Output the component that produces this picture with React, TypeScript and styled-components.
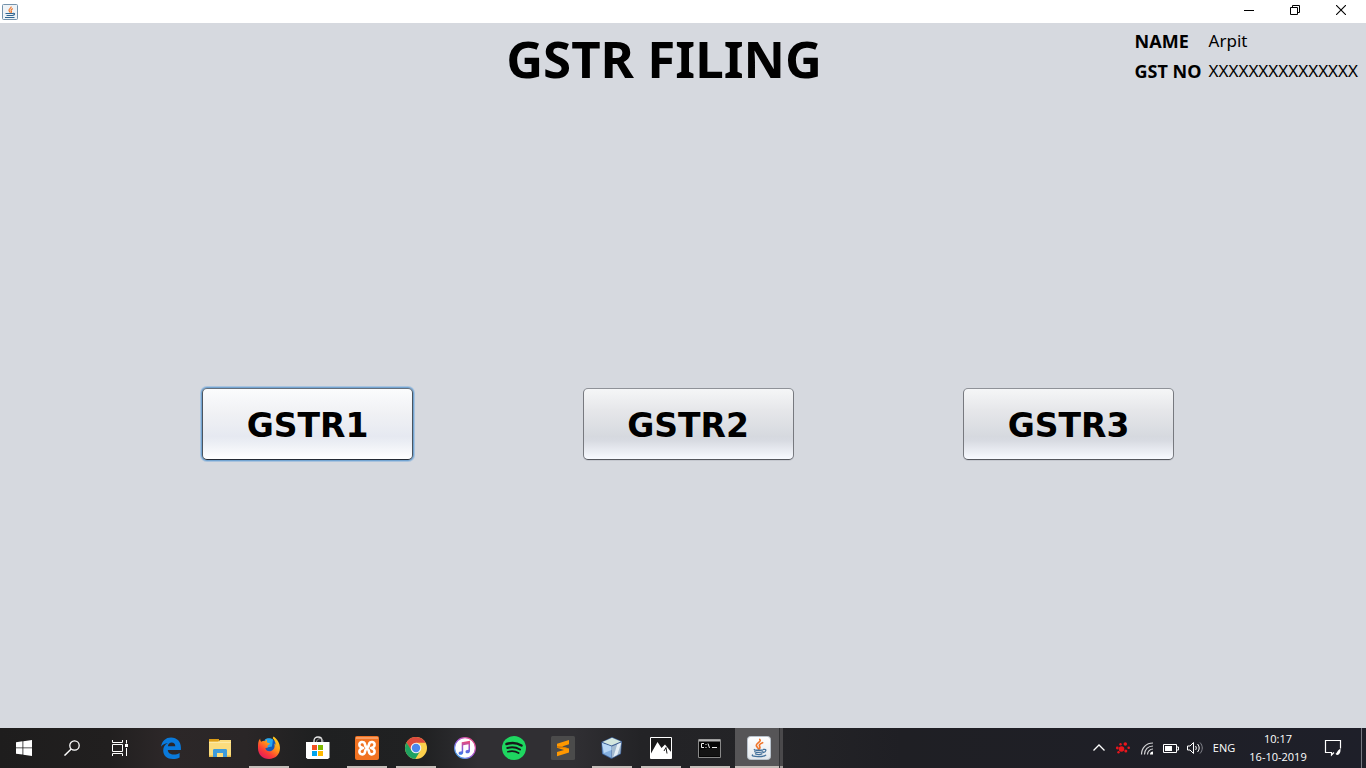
import React from "react";
import styled, { createGlobalStyle, css } from "styled-components";

const GlobalStyle = createGlobalStyle`
  *, *::before, *::after { box-sizing: border-box; }
  body { margin: 0; }
`;

const Window = styled.div`
  display: flex;
  flex-direction: column;
  min-height: 100vh;
  background: #d6d9df;
  color: #000;
  font-family: "Noto Sans", "Open Sans", sans-serif;
`;

const TitleBar = styled.div`
  display: flex;
  align-items: center;
  justify-content: space-between;
  height: 23px;
  padding: 0 2px;
  background: #fff;
`;

const WindowControls = styled.div`
  display: flex;
  align-self: flex-start;
`;

const WindowButton = styled.button`
  display: grid;
  place-items: center;
  width: 46px;
  height: 20px;
  padding: 0;
  border: 0;
  background: transparent;
  color: #000;
`;

const Header = styled.header`
  display: grid;
  grid-template-columns: 1fr auto 1fr;
  height: 97px;
  padding-right: 8px;
`;

const Title = styled.h1`
  grid-column: 2;
  margin: 0 30px 0 0;
  font-size: 51px;
  line-height: 70px;
  font-weight: 700;
  white-space: nowrap;
`;

const Taxpayer = styled.dl`
  display: grid;
  grid-template-columns: auto auto;
  justify-content: end;
  align-content: start;
  column-gap: 4px;
  margin: 0;
  padding-top: 3px;
  font-size: 17px;
  line-height: 30px;
  white-space: nowrap;
`;

const Term = styled.dt`
  min-width: 70px;
  font-size: 18px;
  font-weight: 700;
`;

const Value = styled.dd`
  margin: 0;
`;

const Main = styled.main`
  display: flex;
  flex: 1;
  align-items: center;
  justify-content: space-between;
  gap: 24px;
  padding: 0 192px 0 202px;
`;

const FormButton = styled.button<{ $focused?: boolean }>`
  width: 211px;
  height: 72px;
  padding: 4px 0 0;
  border: 1px solid;
  border-color: #8f9298 #77797f #55575d;
  border-radius: 5px;
  background: linear-gradient(#f5f6f7 0%, #e6e7ea 30%, #d6d9df 68%, #d8dbe2 74%, #f8faff 100%);
  box-shadow: 0 1px 0 #c5c8cf;
  color: #000;
  font-family: "DejaVu Sans", "Noto Sans", sans-serif;
  font-size: 33px;
  line-height: 40px;
  font-weight: 700;
  ${(p) =>
    p.$focused &&
    css`
      border-color: #65707d #4b5560 #252b35;
      background: linear-gradient(#fbfcfd 0%, #f0f1f4 35%, #e6e9f1 68%, #ebeef4 76%, #ffffff 100%);
      box-shadow: 0 0 0 1px #73a4d1, 0 0 0 2px #a9c3de;
    `}
  &:focus {
    outline: none;
  }
`;

const Taskbar = styled.footer`
  display: flex;
  justify-content: space-between;
  height: 40px;
  background: linear-gradient(
    90deg,
    #1e1d1d 0%,
    #211f1f 8%,
    #2c2728 12%,
    #2a2627 18%,
    #1f2021 23%,
    #202122 31%,
    #302f33 35%,
    #302f33 42%,
    #232326 47%,
    #242427 57%,
    #1f1f24 66%,
    #1e1f29 100%
  );
  color: #fff;
  font-family: "Open Sans", "Noto Sans", sans-serif;
  font-size: 11px;
  line-height: 18px;
`;

const Group = styled.div`
  display: flex;
`;

const Apps = styled.nav`
  display: flex;
  gap: 1px;
  margin-left: 3px;
`;

const TaskButton = styled.button<{ $running?: boolean; $active?: boolean }>`
  display: grid;
  place-items: center;
  width: 48px;
  height: 40px;
  padding: 0;
  border: 0;
  background: transparent;
  color: #fff;
  ${(p) =>
    p.$running &&
    css`
      background: linear-gradient(#c4beb9, #c4beb9) bottom center / 40px 2px no-repeat;
    `}
  ${(p) =>
    p.$active &&
    css`
      background:
        linear-gradient(#c4beb9, #c4beb9) bottom left / 44px 2px no-repeat,
        linear-gradient(#a29d9a, #a29d9a) bottom right / 3px 2px no-repeat,
        linear-gradient(90deg, #565557 44px, #323234 44px, #323234 45px, #4a494b 45px);
    `}
`;

const Tray = styled.div`
  display: flex;
  align-items: center;
`;

const TrayButton = styled.button`
  display: grid;
  place-items: center;
  width: 24px;
  height: 40px;
  padding: 0;
  border: 0;
  background: transparent;
  color: #fff;
  font: inherit;
`;

const LanguageButton = styled(TrayButton)`
  width: 34px;
`;

const Clock = styled(TrayButton)`
  align-content: center;
  width: 74px;
`;

const NotificationButton = styled(TrayButton)`
  width: 36px;
`;

const ShowDesktop = styled(TrayButton)`
  width: 5px;
  margin-left: 10px;
  border-left: 1px solid #777982;
`;

const Svg = ({ size = 24, children }: { size?: number; children: React.ReactNode }) => (
  <svg width={size} height={size} viewBox={`0 0 ${size} ${size}`} fill="none" aria-hidden="true">
    {children}
  </svg>
);

const CupArt = () => (
  <>
    <path d="M12.8 3.5c2 2.200-3.900 3.500-3.500 6 .2 1.400 1.700 2.200 2.300 3.600M15.600 6.700c-2 .8-3.700 1.700-3.200 3 .4 1 1.200 1.600.1 3.100" stroke="#f0752a" strokeWidth="1.700" strokeLinecap="round" />
    <path d="M7.300 13.500c-.6 1 8.500 1 9.200 0M7.800 15.700c1.500 1 6.200 1 8 0M8.500 17.800c1.700.8 4.700.8 6.400 0M16.800 13.400c3-.6 2.700 2.500-.7 3.100M5.500 19c-1.800 2.200 12 2 13.200.2" stroke="#43709a" strokeWidth="1.300" strokeLinecap="round" />
  </>
);

const JavaIcon = () => (
  <Svg>
    <defs>
      <linearGradient id="javaTile" x1="0" y1="0" x2="0" y2="1">
        <stop stopColor="#ffffff" />
        <stop offset="1" stopColor="#e2e7ec" />
      </linearGradient>
    </defs>
    <rect x="0.5" y="0.5" width="23" height="23" rx="3" fill="url(#javaTile)" stroke="#b9c3cd" />
    <CupArt />
  </Svg>
);

const WindowIcon = () => (
  <Svg size={16}>
    <rect x="0.5" y="0.5" width="15" height="15" rx="1" fill="#eef3f7" stroke="#7492ab" />
    <path d="M9 2.500c1 1.500-2.500 2.200-2 4 .2.800 1 1.200 1.200 2.200M10.800 4.600C9 5.300 8.700 6 9.300 7c.3.600.3 1 0 1.700" stroke="#ee762b" strokeWidth="1.200" />
    <path d="M3.500 9.500H11M4.500 11.500h6M11 9.300c2.300-.3 2 1.700-.6 2.200M3 13.500h9.500" stroke="#2f6591" strokeWidth="1.200" />
  </Svg>
);

const StartIcon = () => (
  <Svg size={16}>
    <path d="M0 2.200 6.500 1.300v6.200H0zM7.300 1.200 16 0v7.500H7.300zM0 8.300h6.500v6.300L0 13.700zM7.300 8.300H16V16l-8.700-1.200z" fill="#fff" />
  </Svg>
);

const SearchIcon = () => (
  <Svg size={16}>
    <circle cx="10.500" cy="5.500" r="4.700" stroke="#fff" strokeWidth="1.300" />
    <path d="M7.200 8.900.5 15.600" stroke="#fff" strokeWidth="1.400" />
  </Svg>
);

const TaskViewIcon = () => (
  <Svg size={16}>
    <path d="M.5 0v2.500h10V0M.5 16v-2.500h10V16M.5 4.500h10v7H.5zM14.500 0v3.500M14.500 8v8" stroke="#fff" />
    <path d="M13 4h3v3h-3z" fill="#fff" />
  </Svg>
);

const EdgeIcon = () => (
  <Svg>
    <path d="M2 10.800C3 5 6.800 1.600 12 1.600c6 0 9.900 4.300 9.900 10v2.500H8.800c.2 3 2.700 4.500 6 4.500 2.200 0 4-.6 5.800-1.700v4.600c-2 1.100-4.300 1.500-6.800 1.500-5.700 0-9.600-3.400-9.600-8.500 0-3.400 1.700-6 4.700-7.400C6 7.500 3.500 8.800 2 10.800zM8.900 10.200h7.400c-.1-2.300-1.400-3.600-3.600-3.600-2 0-3.400 1.300-3.800 3.600z" fill="#0a7adb" />
  </Svg>
);

const FolderIcon = () => (
  <Svg>
    <path d="M1 3h10v4H1z" fill="#dc9d17" />
    <path d="M1 5.500h9L12 4h11v17H1z" fill="#fbdc7d" />
    <path d="M1 6h22v1H1z" fill="#fce9a5" />
    <path d="M5 21v-6.500C5 13.500 5.500 13 6.500 13h11c1 0 1.500.5 1.500 1.500V21h-4v-4H9v4z" fill="#3d9bdb" />
    <path d="M1 19.500h4V21H1zM19 19.500h4V21h-4z" fill="#e6b948" />
  </Svg>
);

const FirefoxIcon = () => (
  <Svg>
    <defs>
      <linearGradient id="foxBody" x1="1" y1="0" x2="0.300" y2="1">
        <stop stopColor="#ffe226" />
        <stop offset="0.450" stopColor="#ff9a18" />
        <stop offset="0.750" stopColor="#fb4034" />
        <stop offset="1" stopColor="#e41b5b" />
      </linearGradient>
    </defs>
    <circle cx="12" cy="11.500" r="9" fill="#1459b8" />
    <path d="M8 3.500c2-1.600 6-1.500 8 0l-1 7-5 1z" fill="#25a8ee" />
    <path d="M3.200 2.500c-.1 1.300.3 2.300.9 3.200C5.200 5 6.600 5 8 5.300c.4-.8 1.300-1.500 2.300-1.900-.6 1.100-.7 2.200-.1 3.200.8.500 1.700.6 2.700.7-.1 1.300-1.300 1.700-2.200 2.200-.2.800-.3 1.800-.2 2.400-.8-.2-1.500 0-2.200.4.800 3.200 3.900 3.600 6.400 2.400 3-1.400 3.400-4.600 2.500-7.200l1.400 1.200C18.500 6 17.300 4 15.700 2.300L16.500.5c3.800 2.600 6.500 6.600 6.500 11.600C23 18.600 18.400 23 12 23S1 18.600 1 12.300C1 8 .9 5.200 3.200 2.500z" fill="url(#foxBody)" />
  </Svg>
);

const StoreIcon = () => (
  <Svg>
    <path d="M8 7V4.800C8 2.500 9.600 1 12 1s4 1.500 4 3.800V7" stroke="#e8e8e8" strokeWidth="1.300" />
    <path d="M10.500 6c0-3 4.500-5 6.500-1.500V6" stroke="#aaa" strokeWidth=".8" />
    <path d="M0 6h23.500v15.500L22 23H1.500L0 21.500z" fill="#fff" />
    <path d="M6 9h5v5H6z" fill="#f25022" />
    <path d="M12 9h5v5h-5z" fill="#7fba00" />
    <path d="M6 15h5v5H6z" fill="#00a4ef" />
    <path d="M12 15h5v5h-5z" fill="#ffb900" />
  </Svg>
);

const XamppIcon = () => (
  <Svg>
    <rect width="24" height="24" rx="2" fill="#f17221" />
    <path d="M1 2h22" stroke="#f9ab79" strokeWidth="1.500" />
    <path d="M4.500 9.500C3.500 5.500 9.500 4.500 10 8.500c.2 2 .8 2.500 2 2.500s1.800-.5 2-2.500c.5-4 6.500-3 5.500 1-.3 1.300-1.500 2-3.500 2.500 2 .5 3.200 1.500 3.500 2.800 1 4-5 5-5.500 1-.2-2-.8-2.800-2-2.800s-1.800.8-2 2.800c-.5 4-6.500 3-5.500-1C4.800 13.500 6 12.500 8 12c-2-.5-3.200-1.200-3.500-2.500z" stroke="#fff" strokeWidth="2.600" strokeLinejoin="round" />
  </Svg>
);

const ChromeIcon = () => (
  <Svg>
    <circle cx="12" cy="12" r="11" fill="#fcd04b" />
    <path d="M2.500 6.500A11 11 0 0 1 21.600 6.700H12v5.500L6.900 14.700z" fill="#dc4b3e" />
    <path d="M2.500 6.500A11 11 0 0 0 11.300 23l5-8.200-4.300-1.300-4.500 1z" fill="#1fa261" />
    <circle cx="12" cy="12" r="5.300" fill="#f1f1f1" />
    <circle cx="12" cy="12" r="4.200" fill="#4a87ec" />
  </Svg>
);

const MusicIcon = () => (
  <Svg>
    <defs>
      <linearGradient id="musicRing" x1="0" y1="1" x2="1" y2="0">
        <stop stopColor="#29b9f2" />
        <stop offset="0.500" stopColor="#a75be0" />
        <stop offset="1" stopColor="#fb4a72" />
      </linearGradient>
      <linearGradient id="musicNote" x1="0" y1="1" x2="0" y2="0">
        <stop stopColor="#337bea" />
        <stop offset="0.500" stopColor="#9656d0" />
        <stop offset="1" stopColor="#f24a6f" />
      </linearGradient>
    </defs>
    <circle cx="12" cy="12" r="10.400" fill="#fff" stroke="url(#musicRing)" strokeWidth="1.200" />
    <path d="M8.700 6.300 17 4.700v10.200c0 3-4.500 3.200-4.500.8 0-1.500 1.300-1.900 3-2V8.200l-5.300 1v7.200c0 3-4.600 3.200-4.600.8 0-1.500 1.400-1.900 3.100-2z" fill="url(#musicNote)" />
  </Svg>
);

const SpotifyIcon = () => (
  <Svg>
    <circle cx="12" cy="12" r="12" fill="#1ed760" />
    <path d="M4.500 8c5-1.600 10.800-1 15 1.500" stroke="#17191a" strokeWidth="2.500" strokeLinecap="round" />
    <path d="M5.300 12c4.400-1.200 9-.7 12.700 1.500" stroke="#17191a" strokeWidth="2" strokeLinecap="round" />
    <path d="M5.900 15.700c3.700-1 7.700-.6 10.700 1.300" stroke="#17191a" strokeWidth="1.700" strokeLinecap="round" />
  </Svg>
);

const SublimeIcon = () => (
  <Svg>
    <rect width="24" height="24" rx="1.500" fill="#4b4b4b" />
    <path d="M6 7.800 18 4v4.200L11 10.400l7 2.200v4L6 20.300v-4.200l7-2.200-7-2.100z" fill="#ff9800" />
    <path d="m6 11.800 12 .8-7-2.200L6 10z" fill="#d97b00" />
  </Svg>
);

const CubeIcon = () => (
  <Svg>
    <path d="m12 1 10 4.300-1 12.700-9.500 5L2 18 1.300 6z" fill="#3c5d92" />
    <path d="m12 1.700 9 3.900-9.500 4L2.500 6z" fill="#d3e6df" />
    <path d="m2 7 9.500 3.500v11.600l-8.700-4.500z" fill="#84b0df" />
    <path d="m2 7 9.500 3.500v3.500L4 17z" fill="#b8d7f5" />
    <path d="m21.300 6.500-9.500 4v11.600l8.500-4.500z" fill="#a2bad0" />
    <path d="m21.300 6.500-4 1.700-4 12.700 4-2.100z" fill="#e3edf5" />
  </Svg>
);

const PhotosIcon = () => (
  <Svg>
    <path d="M1.500 1.500h21v21h-21z" fill="#19191a" stroke="#fff" />
    <path d="M2 17.500 8.500 6l4 6 3.500-3.500 6.500 8V22H2z" fill="#fff" />
    <path d="m15 15 2-3.500 1 6" stroke="#19191a" strokeWidth="1" />
  </Svg>
);

const TerminalIcon = () => (
  <Svg>
    <path d="M.5 3.500h22v18H.5z" fill="#060606" stroke="#898989" />
    <path d="M1 4.500h21" stroke="#b5b5b5" strokeWidth="2" />
    <path d="M6 7.500H3.500v4H6M7.500 8.500h1M7.500 11.500h1M10 7.500l1.500 4.500M14 11.500h5" stroke="#eee" />
    <path d="m2 14 20-3v9H2z" fill="#fff" fillOpacity=".06" />
  </Svg>
);

const apps = [
  { name: "Microsoft Edge", icon: <EdgeIcon /> },
  { name: "File Explorer", icon: <FolderIcon /> },
  { name: "Firefox", icon: <FirefoxIcon />, running: true },
  { name: "Microsoft Store", icon: <StoreIcon /> },
  { name: "XAMPP", icon: <XamppIcon />, running: true },
  { name: "Google Chrome", icon: <ChromeIcon />, running: true },
  { name: "iTunes", icon: <MusicIcon /> },
  { name: "Spotify", icon: <SpotifyIcon /> },
  { name: "Sublime Text", icon: <SublimeIcon /> },
  { name: "NetBeans", icon: <CubeIcon />, running: true },
  { name: "Photos", icon: <PhotosIcon />, running: true },
  { name: "Command Prompt", icon: <TerminalIcon />, running: true },
  { name: "Java", icon: <JavaIcon />, active: true },
];

export default function App() {
  return (
    <Window>
      <GlobalStyle />
      <TitleBar>
        <WindowIcon />
        <WindowControls>
          <WindowButton aria-label="Minimize">
            <Svg size={10}>
              <path d="M0 5.500h10" stroke="currentColor" />
            </Svg>
          </WindowButton>
          <WindowButton aria-label="Restore">
            <Svg size={10}>
              <path d="M.5 2.500h7v7h-7zM2.500 2V.5h7v7H8" stroke="currentColor" />
            </Svg>
          </WindowButton>
          <WindowButton aria-label="Close">
            <Svg size={10}>
              <path d="m0 0 10 10M10 0 0 10" stroke="currentColor" strokeWidth="1.100" />
            </Svg>
          </WindowButton>
        </WindowControls>
      </TitleBar>

      <Header>
        <Title>GSTR FILING</Title>
        <Taxpayer>
          <Term>NAME</Term>
          <Value>Arpit</Value>
          <Term>GST NO</Term>
          <Value>XXXXXXXXXXXXXXX</Value>
        </Taxpayer>
      </Header>

      <Main>
        <FormButton $focused>GSTR1</FormButton>
        <FormButton>GSTR2</FormButton>
        <FormButton>GSTR3</FormButton>
      </Main>

      <Taskbar>
        <Group>
          <TaskButton aria-label="Start"><StartIcon /></TaskButton>
          <TaskButton aria-label="Search"><SearchIcon /></TaskButton>
          <TaskButton aria-label="Task View"><TaskViewIcon /></TaskButton>
          <Apps aria-label="Applications">
            {apps.map((app) => (
              <TaskButton key={app.name} aria-label={app.name} $running={app.running} $active={app.active}>
                {app.icon}
              </TaskButton>
            ))}
          </Apps>
        </Group>

        <Tray>
          <TrayButton aria-label="Show hidden icons">
            <Svg size={16}>
              <path d="m2.500 10.500 5.500-5.500 5.500 5.500" stroke="currentColor" strokeWidth="1.300" />
            </Svg>
          </TrayButton>
          <TrayButton aria-label="Security">
            <Svg size={16}>
              <g fill="#e8161d">
                <circle cx="6.500" cy="9" r="2.800" />
                <circle cx="2.300" cy="8" r="1.400" />
                <circle cx="5.500" cy="4.300" r="1.200" />
                <circle cx="10.300" cy="4" r="1.800" />
                <circle cx="13.700" cy="7.700" r="1.300" />
                <circle cx="10.800" cy="11" r="1.500" />
                <circle cx="3.500" cy="12.200" r="1.200" />
              </g>
            </Svg>
          </TrayButton>
          <TrayButton aria-label="Wi-Fi">
            <Svg size={16}>
              <path d="M2.500 14.500C2.500 8 7 3 14 3M5.500 14.500C5.500 9.700 9 6 14 6M8.500 14.500c0-3 2.500-5.500 5.500-5.500" stroke="#d4d4d6" strokeWidth="1.200" />
              <path d="M11 14.500c0-1.700 1.300-3 3-3v3z" fill="#fff" />
            </Svg>
          </TrayButton>
          <TrayButton aria-label="Battery">
            <Svg size={16}>
              <path d="M.5 4.500h13v8H.5zM14 7h1.500v3H14" stroke="currentColor" />
              <path d="M2 6h7v5H2z" fill="currentColor" />
            </Svg>
          </TrayButton>
          <TrayButton aria-label="Volume">
            <Svg size={16}>
              <path d="M.5 6H3l3.500-3.500v11L3 10H.5z" stroke="currentColor" />
              <path d="M8.500 6c1 1.200 1 3 0 4M10.500 4c2.200 2.400 2.200 5.600 0 8" stroke="currentColor" />
              <path d="M13 2.500c3 3.400 3 7.600 0 11" stroke="#85868e" />
            </Svg>
          </TrayButton>
          <LanguageButton>ENG</LanguageButton>
          <Clock>
            <span>10:17</span>
            <span>16-10-2019</span>
          </Clock>
          <NotificationButton aria-label="Notifications">
            <Svg size={18}>
              <path d="M10 13.500 7.500 16V13.500H1.500v-12h15v8" stroke="currentColor" strokeWidth="1.200" />
              <path d="M16.500 9.500c-3.800 2.500-3.600 5-5 5.200 1.500 2.500 5.500 1.300 5-5.200z" fill="currentColor" />
            </Svg>
          </NotificationButton>
          <ShowDesktop aria-label="Show desktop" />
        </Tray>
      </Taskbar>
    </Window>
  );
}
